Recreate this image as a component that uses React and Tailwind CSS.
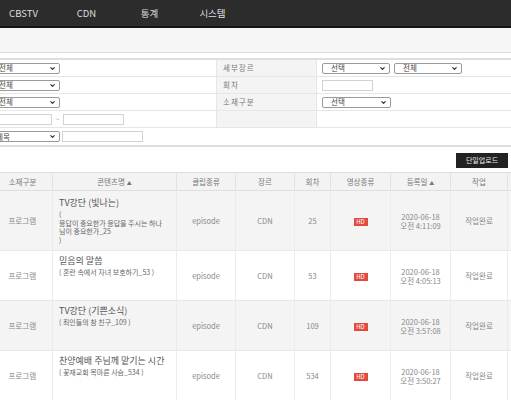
import React from 'react';
import { ChevronDown } from 'lucide-react';

const menus = ['CBSTV', 'CDN', '통계', '시스템'];

const rows = [
    { title: 'TV강단 (빛나는)', sub: ['(', '응답이 중요한가 응답을 주시는 하나', '님이 중요한가_25', ')'], no: '25', time: '오전 4:11:09', bg: 'bg-[#f4f4f4]', h: 'h-[60px]', pt: 'pt-[6px]' },
    { title: '믿음의 말씀', sub: ['( 혼란 속에서 자녀 보호하기_53 )'], no: '53', time: '오전 4:05:13', bg: 'bg-white', h: 'h-[50px]', pt: 'pt-[4px]' },
    { title: 'TV강단 (기쁜소식)', sub: ['( 죄인들의 참 친구_109 )'], no: '109', time: '오전 3:57:08', bg: 'bg-[#f4f4f4]', h: 'h-[50px]', pt: 'pt-[4px]' },
    { title: '찬양예배 주님께 맡기는 시간', sub: ['( 꽃재교회 목마른 사슴_534 )'], no: '534', time: '오전 3:50:27', bg: 'bg-white', h: 'h-[50px]', pt: 'pt-[4px]' },
];

// fake select box, looks like the native one
const Select = ({ label, className = '', pad = 'pl-[8px]' }) => (
    <div className={`h-[11px] border border-[#9a9a9a] rounded-[2px] bg-white flex items-center justify-between pr-[3px] ${pad} ${className}`}>
        <span className="text-[7.5px] leading-none text-[#444]">{label}</span>
        <ChevronDown size={7} strokeWidth={4} className="text-[#333]" />
    </div>
);

const Input = ({ className = '' }) => (
    <div className={`h-[11px] border border-[#d2d2d2] bg-white ${className}`} />
);

const Label = ({ children }) => (
    <div className="bg-[#f4f4f4] border-x border-[#e6e6e6] flex items-center pl-[6px] text-[7.5px] text-[#777] tracking-[1px]">
        {children}
    </div>
);

const Sort = () => <span className="text-[5px] align-middle ml-[2px]">▲</span>;

const App = () => {
    return (
        <div className="w-[511px] h-[400px] overflow-hidden bg-white font-['Noto_Sans_CJK_KR',sans-serif]">
            {/* top menu */}
            <div className="h-[28px] bg-[#2c2c2c] border-b-2 border-[#161616] flex items-center -ml-[8px]">
                {menus.map((m) => (
                    <div key={m} className="w-[63px] text-center text-[9.5px] text-[#dedede]">{m}</div>
                ))}
            </div>
            <div className="h-[25px] bg-[#f6f6f6] border-b border-[#dcdcdc]" />
            <div className="h-[5px]" />

            {/* search form */}
            <div className="border-y-2 border-[#dedede] -ml-[6px]">
                <div className="grid grid-cols-[222px_101px_1fr] h-[17px] border-b border-[#e6e6e6]">
                    <div className="flex items-center"><Select label="전체" pad="pl-[4px]" className="w-[66px]" /></div>
                    <Label>세부장르</Label>
                    <div className="flex items-center gap-[4px] pl-[5px]">
                        <Select label="선택" className="w-[68px]" />
                        <Select label="전체" className="w-[68px]" />
                    </div>
                </div>
                <div className="grid grid-cols-[222px_101px_1fr] h-[17px] border-b border-[#e6e6e6]">
                    <div className="flex items-center"><Select label="전체" pad="pl-[4px]" className="w-[66px]" /></div>
                    <Label>회차</Label>
                    <div className="flex items-center pl-[5px]"><Input className="w-[51px]" /></div>
                </div>
                <div className="grid grid-cols-[222px_101px_1fr] h-[17px] border-b border-[#e6e6e6]">
                    <div className="flex items-center"><Select label="전체" pad="pl-[4px]" className="w-[66px]" /></div>
                    <Label>소재구분</Label>
                    <div className="flex items-center pl-[5px]"><Select label="선택" className="w-[69px]" /></div>
                </div>
                <div className="grid grid-cols-[222px_101px_1fr] h-[17px] border-b border-[#e6e6e6]">
                    <div className="flex items-center">
                        <Input className="w-[58px]" />
                        <span className="w-[11px] text-center text-[7px] text-[#aaa]">~</span>
                        <Input className="w-[61px]" />
                    </div>
                    <Label></Label>
                    <div />
                </div>
                <div className="h-[17px] flex items-center gap-[2px]">
                    <Select label="제목" pad="pl-[1px]" className="w-[66px]" />
                    <Input className="w-[81px]" />
                </div>
            </div>

            {/* buttons */}
            <div className="flex justify-end gap-[3px] pt-[6px] pb-[4px] -mr-[40px]">
                <div className="w-[52px] h-[15px] bg-[#222] text-[#eee] text-[7px] flex items-center justify-center">단일업로드</div>
                <div className="w-[40px] h-[15px] bg-[#222]" />
            </div>

            {/* list */}
            <table className="table-fixed w-[575px] -ml-[8px] border-collapse text-[7.5px]">
                <colgroup>
                    <col className="w-[60px]" />
                    <col className="w-[124px]" />
                    <col className="w-[59px]" />
                    <col className="w-[59px]" />
                    <col className="w-[36px]" />
                    <col className="w-[60px]" />
                    <col className="w-[60px]" />
                    <col className="w-[57px]" />
                    <col className="w-[60px]" />
                </colgroup>
                <thead>
                    <tr className="h-[18px] bg-[#f3f3f3] border-y border-[#dedede] text-[#777]">
                        {['소재구분', '콘텐츠명', '클립종류', '장르', '회차', '영상종류', '등록일', '작업', ''].map((h, i) => (
                            <th key={i} className="font-normal border-x border-[#e2e2e2] leading-none">
                                {h}{(i === 1 || i === 6) && <Sort />}
                            </th>
                        ))}
                    </tr>
                </thead>
                <tbody className="text-[#888]">
                    {rows.map((r) => (
                        <tr key={r.no} className={`${r.bg} ${r.h} border-b border-[#e8e8e8]`}>
                            <td className="text-center border-r border-[#ececec]">프로그램</td>
                            <td className={`align-top pl-[6px] ${r.pt} border-r border-[#ececec]`}>
                                <div className="text-[9px] leading-[12px] text-[#555] whitespace-nowrap">{r.title}</div>
                                <div className="mt-[1px] text-[7px] text-[#666] whitespace-nowrap">
                                    {r.sub.map((s, i) => <div key={i} className="h-[8.5px] leading-[8.5px]">{s}</div>)}
                                </div>
                            </td>
                            <td className="text-center border-r border-[#ececec]">episode</td>
                            <td className="text-center border-r border-[#ececec]">CDN</td>
                            <td className="text-center border-r border-[#ececec]">{r.no}</td>
                            <td className="text-center border-r border-[#ececec]">
                                <span className="inline-block w-[14px] h-[8px] bg-[#e5483c] text-white text-[6px] leading-[8px] text-center align-middle">HD</span>
                            </td>
                            <td className="text-center border-r border-[#ececec]">
                                <div className="h-[9px] leading-[9px]">2020-06-18</div>
                                <div className="h-[9px] leading-[9px]">{r.time}</div>
                            </td>
                            <td className="text-center border-r border-[#ececec]">작업완료</td>
                            <td />
                        </tr>
                    ))}
                </tbody>
            </table>
        </div>
    );
};

export default App;
